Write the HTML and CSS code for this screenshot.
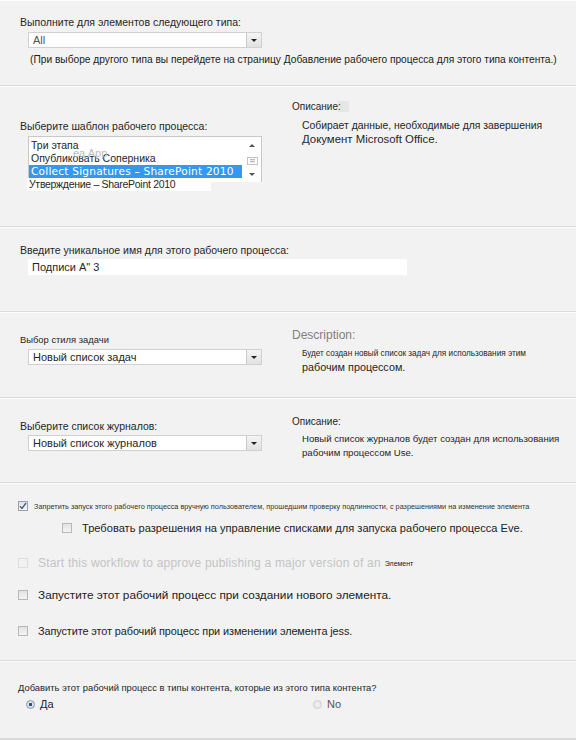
FILE: index.html
```html
<!DOCTYPE html>
<html lang="ru">
<head>
<meta charset="utf-8">
<link rel="stylesheet" href="styles.css">
</head>
<body>
<div class="page">

  <section class="sec s1">
    <div class="lbl">Выполните для элементов следующего типа:</div>
    <div class="select w234"><span class="val gray">All</span><span class="btn"><span class="tri"></span></span></div>
    <div class="note">(При выборе другого типа вы перейдете на страницу Добавление рабочего процесса для этого типа контента.)</div>
  </section>

  <section class="sec s2 two">
    <div class="left">
      <div class="lbl">Выберите шаблон рабочего процесса:</div>
      <div class="listbox">
        <div class="opt">Три этапа</div>
        <div class="opt">Опубликовать Соперника<span class="ghost">ea App</span></div>
        <div class="opt sel">Collect Signatures – SharePoint 2010</div>
        <div class="opt last">Утверждение – SharePoint 2010</div>
        <div class="sbar">
          <span class="up"></span>
          <span class="thumb"></span>
          <span class="down"></span>
        </div>
      </div>
    </div>
    <div class="right">
      <div class="dtitle"><span class="patch">Описание:</span></div>
      <div class="dtext d2a">Собирает данные, необходимые для завершения</div>
      <div class="dtext big">Документ Microsoft Office.</div>
    </div>
  </section>

  <section class="sec s3">
    <div class="lbl">Введите уникальное имя для этого рабочего процесса:</div>
    <div class="input">Подписи A" 3</div>
  </section>

  <section class="sec s4 two">
    <div class="left">
      <div class="lbl small">Выбор стиля задачи</div>
      <div class="select w234"><span class="val">Новый список задач</span><span class="btn"><span class="tri"></span></span></div>
    </div>
    <div class="right">
      <div class="dtitle grayt">Description:</div>
      <div class="dtext small">Будет создан новый список задач для использования этим</div>
      <div class="dtext big2">рабочим процессом.</div>
    </div>
  </section>

  <section class="sec s5 two">
    <div class="left">
      <div class="lbl">Выберите список журналов:</div>
      <div class="select w234"><span class="val">Новый список журналов</span><span class="btn"><span class="tri"></span></span></div>
    </div>
    <div class="right">
      <div class="dtitle">Описание:</div>
      <div class="dtext">Новый список журналов будет создан для использования</div>
      <div class="dtext">рабочим процессом Use.</div>
    </div>
  </section>

  <section class="sec s6">
    <div class="chk r1">
      <span class="box checked"><svg width="8" height="8" viewBox="0 0 8 8"><path d="M1 4.2 L3 6.4 L7 1" fill="none" stroke="#4a5a7a" stroke-width="1.3"/></svg></span>
      <span class="tiny">Запретить запуск этого рабочего процесса вручную пользователем, прошедшим проверку подлинности, с разрешениями на изменение элемента</span>
    </div>
    <div class="chk r2">
      <span class="box"></span>
      <span class="ctext">Требовать разрешения на управление списками для запуска рабочего процесса Eve.</span>
    </div>
    <div class="chk r3">
      <span class="box dis"></span>
      <span class="ctext distext">Start this workflow to approve publishing a major version of an</span><span class="tiny2">Элемент</span>
    </div>
    <div class="chk r4">
      <span class="box"></span>
      <span class="ctext">Запустите этот рабочий процесс при создании нового элемента.</span>
    </div>
    <div class="chk r5">
      <span class="box"></span>
      <span class="ctext">Запустите этот рабочий процесс при изменении элемента jess.</span>
    </div>
  </section>

  <section class="sec s7">
    <div class="q">Добавить этот рабочий процесс в типы контента, которые из этого типа контента?</div>
    <div class="radios">
      <div class="radio yes"><span class="dot on"></span><span>Да</span></div>
      <div class="radio no"><span class="dot"></span><span>No</span></div>
    </div>
  </section>

  <div class="band"></div>
</div>
</body>
</html>
```

FILE: styles.css
```css
html, body {
  margin: 0;
  padding: 0;
  background: #f2f2f2;
}
.page {
  width: 576px;
  font-family: "Liberation Sans", Arial, sans-serif;
  color: #262626;
}
.sec {
  box-sizing: border-box;
  border-bottom: 1px solid #dcdcdc;
  border-top: 1px solid #fbfbfb;
}
.s1 { height: 86px; padding: 15px 0 0 20px; }
.s2 { height: 141px; }
.s3 { height: 85px; padding: 16px 0 0 20px; }
.s4 { height: 86px; }
.s5 { height: 85px; }
.s6 { height: 178px; }
.s7 { height: 77px; padding: 20px 0 0 18px; border-bottom: none; }
.band { height: 4px; background: #dadada; }

.two {
  display: grid;
  grid-template-columns: 292px 1fr;
}
.left { padding-left: 20px; }

.lbl {
  font-size: 10.5px;
  line-height: 12px;
  height: 12px;
  white-space: nowrap;
}
.lbl.small { font-size: 9.4px; }

.select {
  margin: 4px 0 0 8px;
  height: 16px;
  box-sizing: border-box;
  background: #fff;
  border: 1px solid #d0d0d0;
  display: flex;
  align-items: center;
  justify-content: space-between;
}
.w234 { width: 234px; }
.val {
  font-size: 11px;
  padding-left: 4px;
  line-height: 14px;
}
.val.gray { color: #555; }
.btn {
  width: 15px;
  height: 14px;
  box-sizing: border-box;
  border-left: 1px solid #c8c8c8;
  background: linear-gradient(#f4f4f4, #e2e2e2);
  display: flex;
  align-items: center;
  justify-content: center;
}
.tri {
  width: 0;
  height: 0;
  border-left: 3px solid transparent;
  border-right: 3px solid transparent;
  border-top: 3px solid #222;
}
.note {
  margin: 6px 0 0 10px;
  font-size: 10.2px;
  line-height: 12px;
  white-space: nowrap;
  color: #222;
}

/* section 2 */
.s2 .left { padding-top: 33px; }
.s2 .right { padding-top: 14px; }
.listbox {
  position: relative;
  margin: 4px 0 0 8px;
  width: 234px;
  height: 46px;
  box-sizing: border-box;
  background: #fff;
  border: 1px solid #c8c8c8;
  border-bottom: none;
  padding-top: 2px;
}
.opt {
  position: relative;
  font-size: 10.5px;
  line-height: 13px;
  height: 13px;
  padding-left: 2px;
  white-space: nowrap;
}
.opt.sel {
  background: #3399f0;
  color: #fff;
  width: 211px;
  font-family: "DejaVu Sans", sans-serif;
  font-size: 10.6px;
  letter-spacing: 0.2px;
}
.opt.last {
  background: #fff;
  width: 182px;
  margin-left: -2px;
  padding-left: 2px;
  letter-spacing: -0.3px;
}
.ghost {
  position: absolute;
  left: 44px;
  top: -5px;
  color: #bbb;
  font-size: 11px;
}
.sbar {
  position: absolute;
  right: 0;
  top: 0;
  width: 16px;
  height: 44px;
}
.up, .down, .thumb { position: absolute; left: 4px; }
.up {
  top: 7px;
  width: 0; height: 0;
  border-left: 3px solid transparent;
  border-right: 3px solid transparent;
  border-bottom: 3px solid #555;
}
.down {
  top: 36px;
  width: 0; height: 0;
  border-left: 3px solid transparent;
  border-right: 3px solid transparent;
  border-top: 3px solid #555;
}
.thumb {
  top: 20px;
  left: 2px;
  width: 11px;
  height: 8px;
  box-sizing: border-box;
  border: 1px solid #c4c4c4;
  background: repeating-linear-gradient(#e8e8e8 0 1px, #bdbdbd 1px 2px);
  background-clip: content-box;
  padding: 1px 2px;
}
.dtitle {
  font-size: 10px;
  line-height: 12px;
  height: 12px;
  white-space: nowrap;
}
.patch { padding-right: 8px; background: linear-gradient(90deg, transparent 80%, #e6e6e6 80%); }
.dtitle.grayt { font-size: 12px; color: #808080; height: 14px; line-height: 14px; }
.dtext {
  margin-left: 10px;
  font-size: 9.6px;
  line-height: 13px;
  white-space: nowrap;
}
.dtext.d2a { font-size: 10.4px; }
.s2 .dtitle { margin-bottom: 6px; }
.dtext.big { font-size: 11.4px; line-height: 14px; }
.dtext.big2 { font-size: 10.8px; line-height: 15px; }
.dtext.small { font-size: 8.2px; }

/* section 3 */
.input {
  margin: 3px 0 0 8px;
  width: 379px;
  height: 16px;
  box-sizing: border-box;
  background: #fff;
  font-size: 11px;
  line-height: 16px;
  padding-left: 4px;
}

/* section 4 */
.s4 .left { padding-top: 21px; }
.s4 .right { padding-top: 15px; }
.s4 .dtitle { margin-bottom: 5px; }
.s4 .select { margin-top: 3px; }

/* section 5 */
.s5 .left { padding-top: 21px; }
.s5 .right { padding-top: 17px; }
.s5 .dtitle { margin-bottom: 4px; }
.s5 .select { margin-top: 3px; }
.s5 .dtext { line-height: 14px; }

/* section 6 */
.chk {
  display: flex;
  align-items: center;
  white-space: nowrap;
  height: 14px;
}
.r1 { margin: 15px 0 0 18px; }
.r2 { margin: 8px 0 0 62px; }
.r3 { margin: 21px 0 0 18px; }
.r4 { margin: 18px 0 0 18px; }
.r5 { margin: 22px 0 0 18px; }
.box {
  width: 10px;
  height: 10px;
  box-sizing: border-box;
  border: 1px solid #b8b8b8;
  background: linear-gradient(#e2e2e2, #f4f4f4);
  display: inline-flex;
  align-items: center;
  justify-content: center;
  flex: none;
}
.box.checked { border-color: #9aa0aa; background: linear-gradient(#dfe3ea, #f4f6f9); }
.box.dis { border-color: #dedede; background: #f2f2f2; }
.tiny {
  font-size: 7.3px;
  margin-left: 6px;
  color: #333;
}
.ctext {
  font-size: 11.8px;
  margin-left: 10px;
  color: #222;
}
.r2 .ctext { font-size: 11.1px; }
.r5 .ctext { font-size: 10.9px; letter-spacing: -0.1px; }
.distext { color: #c4c4c4; font-size: 12px; letter-spacing: 0.2px; }
.tiny2 { font-size: 7px; margin-left: 4px; color: #222; }

/* section 7 */
.q {
  font-size: 9.4px;
  line-height: 12px;
  white-space: nowrap;
}
.radios {
  display: flex;
  margin-top: 3px;
}
.radio {
  display: flex;
  align-items: center;
  font-size: 11px;
  height: 14px;
}
.radio.yes { margin-left: 8px; width: 287px; }
.radio.no { color: #555; }
.radio .dot {
  width: 9px;
  height: 9px;
  box-sizing: border-box;
  border-radius: 50%;
  border: 1px solid #b8b8b8;
  background: radial-gradient(circle, #f6f6f6 30%, #dcdcdc 100%);
  margin-right: 5px;
}
.radio .dot.on {
  border-color: #8a9ab0;
  background: radial-gradient(circle, #2f4d7a 0 28%, #dfe6ef 34%, #c8d2de 100%);
}
.radio.no .dot { border-color: #d0d0d0; background: radial-gradient(circle, #eee 30%, #ddd 100%); }
```
